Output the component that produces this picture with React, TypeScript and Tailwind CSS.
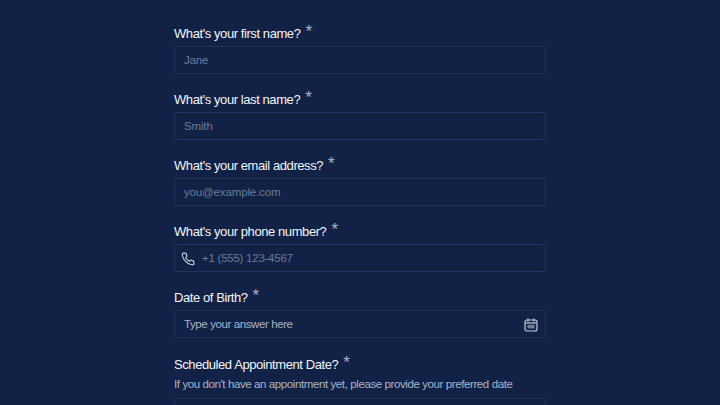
import React from "react";

function Phone() {
  return (
    <svg width="14" height="14" viewBox="0 0 24 24" fill="none" stroke="#c3cbdc" strokeWidth="2" strokeLinecap="round" strokeLinejoin="round" className="shrink-0">
      <path d="M22 16.92v3a2 2 0 0 1-2.18 2 19.79 19.79 0 0 1-8.63-3.07 19.5 19.5 0 0 1-6-6 19.79 19.79 0 0 1-3.07-8.67A2 2 0 0 1 4.11 2h3a2 2 0 0 1 2 1.72 12.84 12.84 0 0 0 .7 2.81 2 2 0 0 1-.45 2.11L8.09 9.91a16 16 0 0 0 6 6l1.27-1.27a2 2 0 0 1 2.11-.45 12.84 12.84 0 0 0 2.81.7A2 2 0 0 1 22 16.92z" />
    </svg>
  );
}

function Cal() {
  return (
    <svg width="14" height="14" viewBox="0 0 14 14" fill="none" className="shrink-0">
      <rect x="1" y="2" width="12" height="11" rx="2" stroke="#c3cbdc" strokeWidth="1.2" />
      <path d="M4 0.8v2.4M10 0.8v2.4" stroke="#c3cbdc" strokeWidth="1.2" strokeLinecap="round" />
      <path d="M1.5 5h11" stroke="#c3cbdc" strokeWidth="1.2" />
      <rect x="3.5" y="6.8" width="7" height="3.6" fill="#c3cbdc" opacity="0.55" />
    </svg>
  );
}

function Label({ text }: { text: string }) {
  return (
    <div className="flex h-[20px] shrink-0 items-start text-[13px] leading-[20px] tracking-[-0.42px] text-[#f1f4f9]">
      <span className="mt-[1px]">{text}</span>
      <span className="ml-[5px] mt-[-1px] text-[17px] leading-[20px] text-[#aab4c9]">*</span>
    </div>
  );
}

function Box({ children }: { children: React.ReactNode }) {
  return (
    <div className="flex h-[28px] shrink-0 items-center rounded-[3px] border border-[#20335c] bg-[#112246] pl-[9px] pr-[7px] pt-[2px] text-[11.5px] text-[#6b7a9b]">
      {children}
    </div>
  );
}

function Field({ label, placeholder }: { label: string; placeholder: string }) {
  return (
    <div className="flex h-[66px] shrink-0 flex-col gap-[3px]">
      <Label text={label} />
      <Box>
        <span className="tracking-[-0.15px]">{placeholder}</span>
      </Box>
    </div>
  );
}

export default function App() {
  return (
    <div className="flex h-[405px] w-[720px] justify-center overflow-hidden bg-[#112246] font-['Liberation_Sans',sans-serif]">
      <div className="flex w-[372px] flex-col pt-[23px]">
        <Field label="What's your first name?" placeholder="Jane" />
        <Field label="What's your last name?" placeholder="Smith" />
        <Field label="What's your email address?" placeholder="you@example.com" />
        <div className="flex h-[66px] shrink-0 flex-col gap-[3px]">
          <Label text="What's your phone number?" />
          <div className="flex h-[28px] shrink-0 items-center rounded-[3px] border border-[#20335c] bg-[#112246] pl-[6px] pr-[7px] pt-[2px] text-[11.5px] text-[#6b7a9b]">
            <span className="mr-[7px]"><Phone /></span>
            <span className="tracking-[-0.25px]">+1 (555) 123-4567</span>
          </div>
        </div>
        <div className="flex h-[66px] shrink-0 flex-col gap-[3px]">
          <Label text="Date of Birth?" />
          <Box>
            <span className="flex-1 tracking-[-0.4px] text-[#a9b3c9]">Type your answer here</span>
            <Cal />
          </Box>
        </div>
        <div className="mt-[1px] flex shrink-0 flex-col">
          <Label text="Scheduled Appointment Date?" />
          <div className="mt-[3px] text-[11.5px] leading-[14px] tracking-[-0.4px] text-[#a9b3c9]">
            If you don't have an appointment yet, please provide your preferred date
          </div>
          <div className="mt-[7px]">
            <Box><span /></Box>
          </div>
        </div>
      </div>
    </div>
  );
}
